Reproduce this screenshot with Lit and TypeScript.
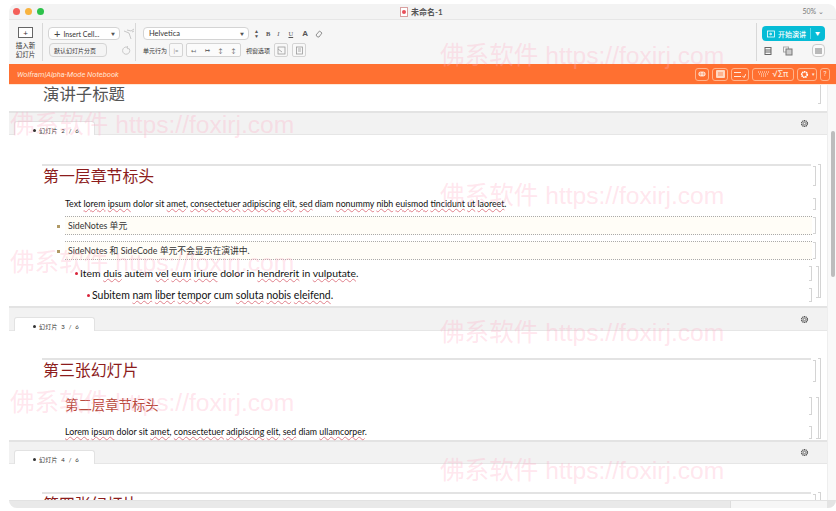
import { LitElement, html, css, svg } from "lit";
import { customElement } from "lit/decorators.js";

const marks = [[440, 40], [10, 109], [440, 180], [10, 247], [440, 317], [10, 387], [440, 455]];

const gear = svg`<svg width="9" height="9" viewBox="0 0 10 10"><circle cx="5" cy="5" r="3.2" fill="none" stroke="#555" stroke-width="1.6" stroke-dasharray="1.4 .6"/><circle cx="5" cy="5" r="1.4" fill="none" stroke="#555" stroke-width=".8"/></svg>`;

@customElement("app-root")
export class AppRoot extends LitElement {
  static styles = css`
    :host { display: block; position: relative; width: 836px; height: 511px; overflow: hidden; background: #fff; font-family: "Lato", "Noto Sans CJK SC", sans-serif; color: #222; }
    .win { display: flex; flex-direction: column; width: 827px; height: 504px; margin: 4px 0 0 9px; border-radius: 8px; overflow: hidden; background: #fff; }
    .title { flex: 0 0 16px; min-height: 0; box-sizing: border-box; display: flex; align-items: center; background: #f3f3f3; border-bottom: 1px solid #e6e6e6; padding-left: 4px; }
    .lights { display: flex; gap: 5px; }
    .lights i { width: 7px; height: 7px; border-radius: 50%; }
    .doc { display: flex; align-items: center; gap: 3px; margin-left: 356px; font-size: 8px; font-weight: 700; color: #555; }
    .doc svg { display: block; }
    .zoom { margin-left: auto; margin-right: 12px; font-size: 7px; color: #777; }
    .tools { flex: 0 0 44px; min-height: 0; display: flex; background: #f6f6f6; align-items: stretch; }
    .g { display: flex; flex-direction: column; }
    .g1 { width: 34px; flex: none; align-items: center; padding-top: 4px; box-sizing: border-box; border-right: 1px solid #d8d8d8; margin: 3px 0; }
    .addbox { width: 13px; height: 9px; border: 1px solid #666; background: #fff; display: flex; align-items: center; justify-content: center; font-size: 8px; line-height: 8px; color: #333; }
    .g1 span { font-size: 6.5px; line-height: 9px; margin-top: 3px; text-align: center; color: #333; }
    .g2 { width: 93px; flex: none; box-sizing: border-box; padding: 4px 0 0 5px; border-right: 1px solid #d8d8d8; margin: 3px 0; gap: 3px; }
    .r { display: flex; align-items: center; }
    .sel { display: flex; align-items: center; box-sizing: border-box; height: 13px; background: #fff; border: 1px solid #d4d4d4; border-radius: 4px; font-size: 7px; color: #333; }
    .sel b { margin-left: auto; margin-right: 4px; font-size: 4px; font-weight: 400; color: #555; }
    .insert { width: 72px; padding-left: 5px; gap: 3px; }
    .insert em { font-style: normal; font-size: 11px; line-height: 11px; color: #444; }
    .pg { width: 58px; height: 14px; margin-left: 1px; padding-left: 4px; background: #f4f4f4; font-size: 6px; }
    .ic { margin-left: 3px; display: block; }
    .g3 { padding: 4px 0 0 7px; gap: 3px; flex: none; width: 621px; box-sizing: border-box; border-right: 1px solid #d8d8d8; margin: 3px 0; }
    .font { width: 106px; padding-left: 5px; font-size: 7.5px; }
    .fmt { display: flex; align-items: center; margin-left: 5px; gap: 7px; font: 6.5px "Liberation Serif", serif; color: #555; }
    .small { font-size: 6px; color: #333; }
    .bt { box-sizing: border-box; width: 14px; height: 14px; border: 1px solid #d4d4d4; border-radius: 2px; background: #f8f8f8; display: flex; align-items: center; justify-content: center; font-size: 6px; color: #888; }
    .bgroup { box-sizing: border-box; display: flex; align-items: center; justify-content: space-around; width: 55px; height: 14px; margin-left: 3px; border: 1px solid #d4d4d4; border-radius: 2px; background: #fbfbfb; font-size: 6px; color: #666; }
    .g4 { flex: none; padding: 6px 0 0 5px; gap: 3px; }
    .start { display: flex; align-items: center; width: 63px; height: 15px; box-sizing: border-box; background: #06bcd6; border-radius: 4px; color: #fff; font-size: 7px; padding-left: 5px; gap: 3px; font-weight: 500; }
    .start b { margin-left: auto; margin-right: 5px; font-size: 5px; padding-left: 4px; border-left: 1px solid #5fd8e8; line-height: 11px; }
    .round { box-sizing: border-box; width: 13px; height: 13px; border: 1px solid #ccc; border-radius: 4px; margin-left: 19px; display: flex; align-items: center; justify-content: center; background: #fafafa; }
    .orange { flex: 0 0 21px; min-height: 0; display: flex; align-items: center; background: #ff7031; padding-left: 8px; box-sizing: border-box; color: #ffe5d6; font-size: 7.5px; font-style: italic; border-bottom: 1px solid #ffe9d8; font-family: "Roboto", sans-serif; }
    .obs { display: flex; margin-left: auto; margin-right: 6px; gap: 3px; }
    .ob { box-sizing: border-box; height: 13px; border: 1px solid #ffb48c; border-radius: 3px; display: flex; align-items: center; justify-content: center; color: #ffeadd; font-style: normal; font-size: 7px; gap: 3px; }
    .row { flex: 1; display: flex; min-height: 0; }
    .main { flex: 1; min-width: 0; overflow: hidden; }
    .vs { flex: 0 0 9px; background: #f9f9f9; border-left: 1px solid #eee; box-sizing: border-box; padding: 46px 0 0 3px; }
    .thumb { width: 4px; height: 146px; background: #bdbdbd; border-radius: 2px; }
    .hs { flex: 0 0 8px; display: flex; background: #f6f6f6; border-top: 1px solid #e2e2e2; box-sizing: border-box; }
    .hs i { width: 721px; background: #e9e9e9; border-right: 1px solid #ddd; }
    .hs u { margin-left: auto; width: 9px; background: #e4e4e4; }
    .band { display: flex; align-items: flex-end; box-sizing: border-box; background: #f2f2f2; border-top: 2px solid #e3e3e3; border-bottom: 1px solid #e6e6e6; }
    .tab { box-sizing: border-box; display: flex; align-items: center; width: 81px; height: 14px; margin: 0 0 -1px 5px; padding: 4px 0 0 18px; background: #fff; border: 1px solid #e2e2e2; border-bottom: 0; border-radius: 3px 3px 0 0; font-size: 6px; letter-spacing: .25px; color: #333; white-space: pre; }
    .tab::before { content: ""; width: 3px; height: 3px; border-radius: 50%; background: #333; margin-right: 3px; }
    .gear { margin-left: auto; margin-right: 18px; align-self: center; display: block; line-height: 0; }
    .sub { position: relative; box-sizing: border-box; height: 26px; margin: 0 16px 0 34px; font-size: 16.4px; line-height: 18px; color: #555; }
    .slide { position: relative; padding-top: 29px; }
    .s3 { padding-top: 27px; }
    .s4 { padding-top: 28px; }
    .cell { position: relative; }
    .h1 { box-sizing: border-box; margin: 0 16px 0 33px; height: 22px; padding-left: 1px; border-top: 2px solid #e3e3e3; font-size: 15.9px; line-height: 20px; color: #8c1c1c; }
    .h2 { height: 18px; margin: 15px 16px 0 56px; font-size: 13.4px; line-height: 16px; color: #b8493c; }
    .txt { height: 12px; margin: 12px 16px 0 56px; font-size: 8.8px; line-height: 12px; color: #111; white-space: nowrap; }
    .s3 .txt { margin-top: 11px; height: 13px; }
    .note { box-sizing: border-box; height: 19px; margin: 6px 15px 0 56px; padding-left: 3px; border-top: 1px dotted #aaa; border-bottom: 1px dotted #aaa; background: #fffdf7; font-size: 8.8px; line-height: 17px; color: #333; white-space: nowrap; }
    .note::before { content: ""; position: absolute; left: -8px; top: 8px; width: 3px; height: 3px; background: #b09a66; }
    .it { height: 15px; margin: 6px 16px 0 66px; font-size: 10.4px; line-height: 15px; color: #111; white-space: pre; display: flex; align-items: center; }
    .it2 { height: 14px; margin: 7px 16px 4px 78px; font-size: 10.5px; }
    .it::before { content: ""; width: 3px; height: 3px; border-radius: 50%; background: #d8233a; flex: none; margin-right: 2px; }
    .sp { text-decoration: underline wavy #e0808a .5px; text-underline-offset: 1px; text-decoration-skip-ink: none; }
    .br { position: absolute; top: 0; bottom: 0; right: -5px; width: 2px; border: 1px solid #d4d4d4; border-left: 0; }
    .in { right: -1px; }
    .outer { right: 6px; top: 29px; bottom: 4px; }
    .s3 .outer { top: 27px; bottom: 1px; }
    .s4 .outer { top: 28px; bottom: 1px; }
    .outer2 { right: 8px; top: 131px; bottom: 4px; }
    .s3 .outer2 { top: 66px; bottom: 1px; }
    .sub .br { right: -10px; top: -4px; bottom: 7px; }
    .wm { position: absolute; font-size: 24.6px; line-height: 32px; color: rgba(255, 170, 195, .3); white-space: nowrap; pointer-events: none; font-family: "Liberation Sans", "Noto Sans CJK SC", sans-serif; }
  `;

  render() {
    const band = (n: number, h = 24) => html`
      <div class="band" style="height:${h}px"><div class="tab"><span>幻灯片  ${n}  /  6</span></div><span class="gear">${gear}</span></div>`;
    return html`
      <div class="win">
        <div class="title">
          <div class="lights"><i style="background:#f4605a"></i><i style="background:#f8b33e"></i><i style="background:#2dc24a"></i></div>
          <div class="doc"><svg width="8" height="10" viewBox="0 0 8 10"><rect x=".5" y=".5" width="7" height="9" fill="#fff" stroke="#d9a0a0"/><circle cx="4" cy="5" r="2" fill="#e8505a"/></svg><span>未命名-1</span></div>
          <div class="zoom">50% ⌄</div>
        </div>
        <div class="tools">
          <div class="g g1"><div class="addbox">+</div><span>插入新<br />幻灯片</span></div>
          <div class="g g2">
            <div class="r"><div class="sel insert"><em>+</em><span>Insert Cell...</span><b>▼</b></div>
              <svg class="ic" width="12" height="12" viewBox="0 0 12 12" fill="none" stroke="#bbb" stroke-width=".8"><path d="M1 3l5 2 2 6M4 2l4 1 3-2M9 4l2-1"/></svg></div>
            <div class="r"><div class="sel pg">默认幻灯片分页</div>
              <svg class="ic" style="margin-left:15px" width="9" height="9" viewBox="0 0 10 10" fill="none" stroke="#c4c4c4"><path d="M8 3a4 4 0 1 1-2-1.600M6 0v3h2"/></svg></div>
          </div>
          <div class="g g3">
            <div class="r"><div class="sel font"><span>Helvetica</span><b>▼</b></div>
              <div class="fmt"><span style="font-size:5px;line-height:5px;text-align:center">▲<br />▼</span><b>B</b><i>I</i><u style="margin-left:2px">U</u><b style="margin-left:2px;font-size:8px;font-family:'Liberation Sans'">A</b>
                <svg width="8" height="8" viewBox="0 0 8 8" fill="none" stroke="#777" stroke-width=".8"><path d="M1 5l3.500-4L7 3 4 7H2.500z"/></svg></div></div>
            <div class="r"><span class="small" style="width:26px">单元行为</span><div class="bt">|=</div>
              <div class="bgroup"><span>↤</span><span>↦</span><span>↕</span><span>↕</span></div>
              <span class="small" style="width:28px;margin-left:5px">视窗选项</span><div class="bt"><svg width="9" height="9" viewBox="0 0 9 9" fill="none" stroke="#999" stroke-width=".8"><rect x="1" y="1" width="7" height="7"/><path d="M1 3l4 3"/></svg></div>
              <div class="bt" style="margin-left:4px"><svg width="9" height="9" viewBox="0 0 9 9" fill="none" stroke="#999" stroke-width=".8"><rect x="1.500" y="1" width="6" height="7"/><path d="M3 3h3M3 5h3"/></svg></div></div>
          </div>
          <div class="g g4">
            <div class="start"><svg width="8" height="8" viewBox="0 0 8 8" fill="none" stroke="#fff" stroke-width=".8"><rect x=".5" y="1" width="7" height="6"/><path d="M3 3l2 1-2 1z"/></svg><span>开始演讲</span><b>▼</b></div>
            <div class="r">
              <svg style="margin-left:2px" width="8" height="10" viewBox="0 0 8 10" fill="none" stroke="#666"><rect x="1" y="1.500" width="6" height="7"/><path d="M1 4h6M1 6h6"/></svg>
              <svg style="margin-left:11px" width="10" height="10" viewBox="0 0 10 10" fill="none" stroke="#777"><rect x=".5" y="1" width="5" height="5" stroke="#aaa"/><rect x="3" y="3" width="6" height="6" fill="#ccc"/></svg>
              <div class="round"><svg width="7" height="6" viewBox="0 0 7 6" stroke="#555" stroke-width=".8"><path d="M0 1h7M0 3h7M0 5h7"/></svg></div>
            </div>
          </div>
        </div>
        <div class="orange">
          <span>Wolfram|Alpha-Mode Notebook</span>
          <div class="obs">
            <div class="ob" style="width:14px"><svg width="8" height="8" viewBox="0 0 8 8" fill="none" stroke="#ffeadd" stroke-width="1.200"><circle cx="3" cy="4" r="2"/><circle cx="5" cy="4" r="2"/></svg></div>
            <div class="ob" style="width:16px"><svg width="9" height="8" viewBox="0 0 9 8" fill="#ffd8c2"><rect width="9" height="8" rx="1"/><path d="M2 3h5M2 5h5" stroke="#ff7031" stroke-width=".7"/></svg></div>
            <div class="ob" style="width:18px"><svg width="12" height="7" viewBox="0 0 12 7" stroke="#ffeadd" fill="none"><path d="M0 1.500h7M0 5.500h7M8.500 5l1.500 1.500L12 3"/></svg></div>
            <div class="ob" style="width:42px"><svg width="12" height="6" viewBox="0 0 12 6" stroke="#ffeadd" stroke-dasharray="1 1"><path d="M0 1h12M1 3h10M3 5h6"/></svg><span style="font-size:9px">√Σπ</span></div>
            <div class="ob" style="width:20px"><svg width="9" height="9" viewBox="0 0 10 10"><circle cx="5" cy="5" r="3" fill="none" stroke="#fff" stroke-width="2" stroke-dasharray="1.600 .6"/></svg><span style="font-size:5px">▾</span></div>
            <div class="ob" style="width:10px">?</div>
          </div>
        </div>
        <div class="row">
          <div class="main">
            <div class="sub">演讲子标题<span class="br"></span></div>
            ${band(2)}
            <div class="slide">
              <span class="br outer"></span>
              <div class="cell h1">第一层章节标头<span class="br"></span></div>
              <div class="cell txt">Text <span class="sp">lorem</span> <span class="sp">ipsum</span> dolor sit <span class="sp">amet</span>, <span class="sp">consectetuer</span> <span class="sp">adipiscing</span> <span class="sp">elit</span>, <span class="sp">sed</span> diam <span class="sp">nonummy</span> <span class="sp">nibh</span> <span class="sp">euismod</span> <span class="sp">tincidunt</span> <span class="sp">ut</span> <span class="sp">laoreet</span>.<span class="br"></span></div>
              <div class="cell note">SideNotes 单元<span class="br" style="right:-4px"></span></div>
              <div class="cell note">SideNotes 和 SideCode 单元不会显示在演讲中.<span class="br" style="right:-4px"></span></div>
              <div class="cell it"><span>Item <span class="sp">duis</span> autem <span class="sp">vel</span> <span class="sp">eum</span> <span class="sp">iriure</span> dolor in <span class="sp">hendrerit</span> in <span class="sp">vulputate</span>.</span><span class="br in"></span></div>
              <div class="cell it it2"><span>Subitem <span class="sp">nam</span> <span class="sp">liber</span> <span class="sp">tempor</span> cum <span class="sp">soluta</span> <span class="sp">nobis</span> <span class="sp">eleifend</span>.</span><span class="br in"></span></div>
              <span class="br outer2"></span>
            </div>
            ${band(3, 25)}
            <div class="slide s3">
              <span class="br outer"></span>
              <div class="cell h1" style="height:24px">第三张幻灯片<span class="br"></span></div>
              <div class="cell h2">第二层章节标头<span class="br in"></span></div>
              <div class="cell txt"><span class="sp">Lorem</span> <span class="sp">ipsum</span> dolor sit <span class="sp">amet</span>, <span class="sp">consectetuer</span> <span class="sp">adipiscing</span> <span class="sp">elit</span>, <span class="sp">sed</span> diam <span class="sp">ullamcorper</span>.<span class="br in"></span></div>
              <div style="height:1px"></div>
              <span class="br outer2"></span>
            </div>
            ${band(4)}
            <div class="slide s4">
              <span class="br outer"></span>
              <div class="cell h1">第四张幻灯片<span class="br"></span></div>
            </div>
          </div>
          <div class="vs"><div class="thumb"></div></div>
        </div>
        <div class="hs"><i></i><u></u></div>
      </div>
      ${marks.map(([x, y]) => html`<div class="wm" style="left:${x}px;top:${y}px">佛系软件 https://foxirj.com</div>`)}
    `;
  }
}
